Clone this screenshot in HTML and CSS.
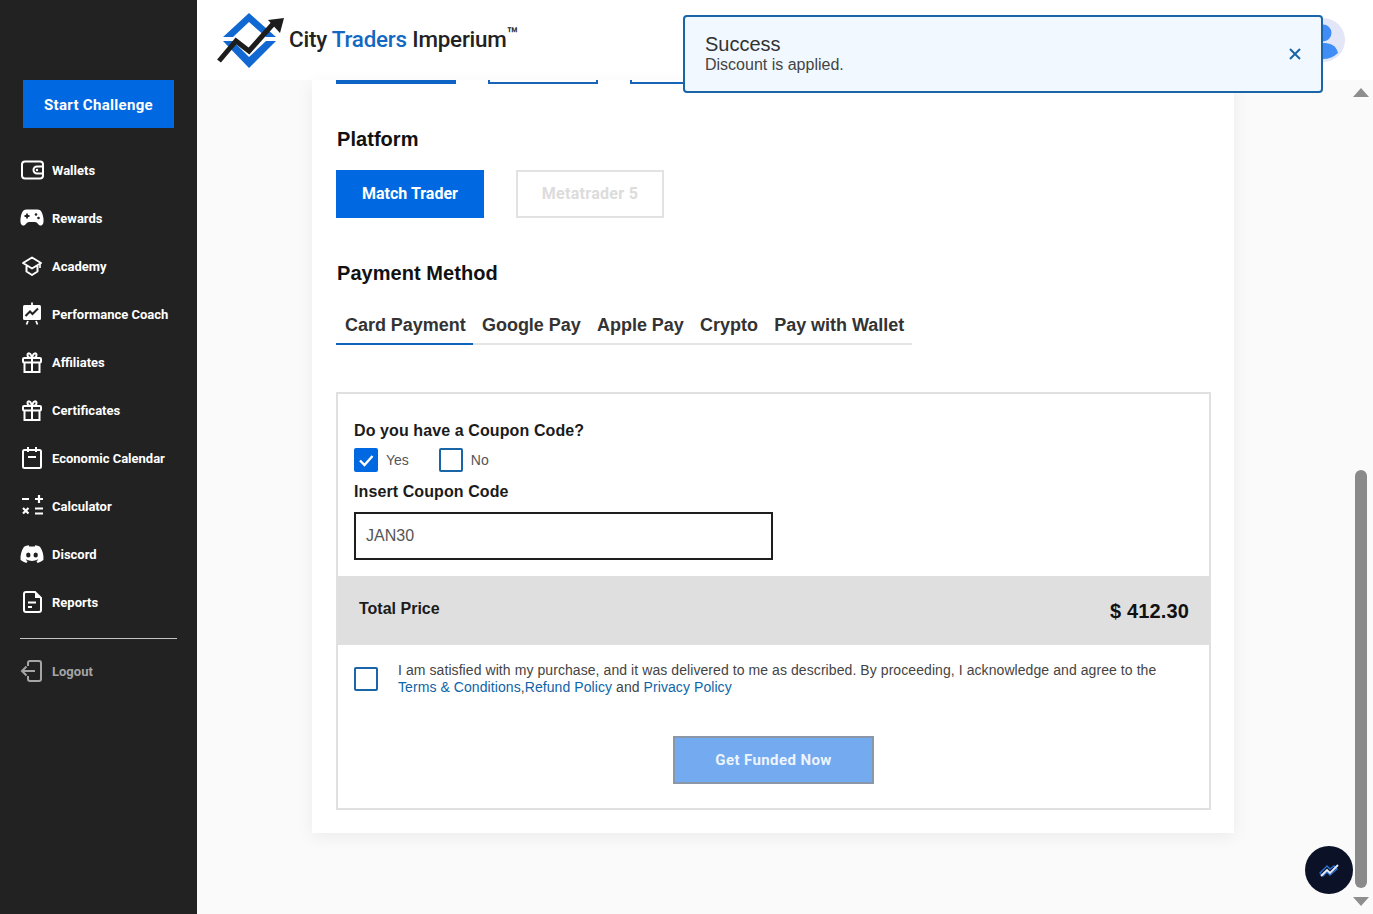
FILE: index.html
```html
<!DOCTYPE html>
<html lang="en">
<head>
<meta charset="utf-8">
<title>City Traders Imperium</title>
<link rel="stylesheet" href="styles.css">
</head>
<body>
<div class="app">
  <aside class="sidebar">
    <a class="start-btn">Start Challenge</a>
    <nav class="nav">
      <a class="nav-item"><svg class="ic" viewBox="0 0 24 24"><rect x="2" y="3.500" width="21" height="17" rx="3" fill="none" stroke="#fff" stroke-width="2"/><path d="M23 8.500h-6a3.500 3.500 0 0 0 0 7h6" fill="none" stroke="#fff" stroke-width="2"/><circle cx="17" cy="12" r="1.200" fill="#fff"/></svg><span>Wallets</span></a>
      <a class="nav-item"><svg class="ic" viewBox="0 0 24 24"><path d="M6.500 3.500h11c3.500 0 5 3.500 5.800 8 .6 3.500.4 7.500-2.300 8-2.400.4-3.600-3.500-6-3.500H9c-2.400 0-3.600 3.900-6 3.500-2.700-.5-2.900-4.500-2.300-8 .8-4.500 2.300-8 5.800-8z" fill="#fff"/><path d="M4.500 10h5M7 7.500v5" stroke="#222" stroke-width="1.800"/><circle cx="16" cy="8.500" r="1.300" fill="#222"/><circle cx="18.500" cy="12" r="1.300" fill="#222"/></svg><span>Rewards</span></a>
      <a class="nav-item"><svg class="ic" viewBox="0 0 24 24"><path d="M12 3.500l9 5.500-9 5.500-9-5.500z M6.500 12v5.500l5.500 3.500 5.500-3.500V12" fill="none" stroke="#fff" stroke-width="2" stroke-linejoin="round"/><path d="M20 9.500V14" stroke="#fff" stroke-width="1.600"/></svg><span>Academy</span></a>
      <a class="nav-item"><svg class="ic" viewBox="0 0 24 24"><path d="M12 0.500v3" stroke="#fff" stroke-width="1.800"/><rect x="3" y="3" width="18" height="15" rx="1.500" fill="#fff"/><path d="M5.500 14l4.500-4.500 2.500 2.500 5.500-5.500" fill="none" stroke="#222" stroke-width="2"/><path d="M8 19l-1.500 3.500M16 19l1.500 3.500" stroke="#fff" stroke-width="1.800"/></svg><span>Performance Coach</span></a>
      <a class="nav-item"><svg class="ic" viewBox="0 0 24 24"><g fill="none" stroke="#fff" stroke-width="2"><rect x="3" y="8" width="18" height="4.500" rx="1"/><path d="M4.500 12.500V22h15v-9.500M12 8v14"/><path d="M12 8C9 8 7.500 6.800 7.500 5S10.500 1.500 12 8c1.500-6.500 4.500-4.800 4.500-3S15 8 12 8z"/></g></svg><span>Affiliates</span></a>
      <a class="nav-item"><svg class="ic" viewBox="0 0 24 24"><g fill="none" stroke="#fff" stroke-width="2"><rect x="3" y="8" width="18" height="4.500" rx="1"/><path d="M4.500 12.500V22h15v-9.500M12 8v14"/><path d="M12 8C9 8 7.500 6.800 7.500 5S10.500 1.500 12 8c1.500-6.500 4.500-4.800 4.500-3S15 8 12 8z"/></g></svg><span>Certificates</span></a>
      <a class="nav-item"><svg class="ic" viewBox="0 0 24 24"><g fill="none" stroke="#fff" stroke-width="2"><rect x="3" y="4" width="18" height="18" rx="1.500"/><path d="M8 1v5M16 1v5M8 11h8"/></g></svg><span>Economic Calendar</span></a>
      <a class="nav-item"><svg class="ic" viewBox="0 0 24 24"><path d="M2 5h7M15 5h8M19 1v8M3 14l5.500 5.500M8.500 14L3 19.500M15 14.500h8M15 19.500h8" stroke="#fff" stroke-width="2.200" fill="none"/></svg><span>Calculator</span></a>
      <a class="nav-item"><svg class="ic" viewBox="0 0 24 24"><path d="M20 4.800A19 19 0 0 0 15.300 3.300l-.6 1.300a17 17 0 0 0-5.400 0L8.700 3.300A19 19 0 0 0 4 4.800C1 9.300.2 13.700.6 18a19 19 0 0 0 5.800 3l1.200-2-1.900-1 .5-.4a13.500 13.500 0 0 0 11.600 0l.5.400-1.900 1 1.200 2a19 19 0 0 0 5.800-3c.5-5-.8-9.400-3.400-13.200z" fill="#fff"/><ellipse cx="8.300" cy="13" rx="2.200" ry="2.500" fill="#222"/><ellipse cx="15.700" cy="13" rx="2.200" ry="2.500" fill="#222"/></svg><span>Discord</span></a>
      <a class="nav-item"><svg class="ic" viewBox="0 0 24 24"><path d="M6 2h9l6 6v12a2 2 0 0 1-2 2H6a2 2 0 0 1-2-2V4a2 2 0 0 1 2-2z" fill="none" stroke="#fff" stroke-width="2"/><path d="M8 12.500h8M8 17h4" stroke="#fff" stroke-width="2"/><path d="M15 2v6h6" fill="#fff"/></svg><span>Reports</span></a>
    </nav>
    <hr class="divider">
    <a class="nav-item logout"><svg class="ic" viewBox="0 0 24 24"><path d="M8 7V4a2 2 0 0 1 2-2h9a2 2 0 0 1 2 2v16a2 2 0 0 1-2 2h-9a2 2 0 0 1-2-2v-3" fill="none" stroke="#a5a5a5" stroke-width="2"/><path d="M15 12H2M6.500 7.500L2 12l4.500 4.500" fill="none" stroke="#a5a5a5" stroke-width="2"/></svg><span>Logout</span></a>
  </aside>

  <div class="main">
    <header class="topbar">
      <div class="brand">
        <svg class="brand-mark" viewBox="0 0 68 60">
          <path d="M6 27L32 3l27 24H49L32 12 16 27z" fill="#1268d3"/>
          <path d="M6 31h10l16 16 17-16h10L32 58z" fill="#1268d3"/>
          <path d="M2 51l17-20 13 10 24-27" fill="none" stroke="#1d1d1d" stroke-width="5"/>
          <path d="M67 8L51 10l12 13z" fill="#1d1d1d"/>
        </svg>
        <span class="brand-name">City <em>Traders</em> Imperium<sup>™</sup></span>
      </div>
      <div class="avatar"><svg viewBox="0 0 44 44"><circle cx="22" cy="15" r="8.500" fill="#3f8df5"/><path d="M7 35c2-8 8-10 15-10s13 2 15 10a22 22 0 0 1-30 0z" fill="#3f8df5"/></svg></div>
    </header>

    <div class="body">
      <section class="content">
        <div class="card">
          <div class="steps">
            <span class="step step-active"></span>
            <span class="step step-a"></span>
            <span class="step step-b"></span>
          </div>
          <h2 class="heading heading-platform">Platform</h2>
          <div class="platforms">
            <button class="plat plat-on">Match Trader</button>
            <button class="plat plat-off">Metatrader 5</button>
          </div>
          <h2 class="heading heading-pay">Payment Method</h2>
          <div class="tabs">
            <span class="tab tab-on">Card Payment</span>
            <span class="tab">Google Pay</span>
            <span class="tab">Apple Pay</span>
            <span class="tab">Crypto</span>
            <span class="tab">Pay with Wallet</span>
          </div>
          <div class="box">
            <div class="coupon">
              <h3 class="label-q">Do you have a Coupon Code?</h3>
              <div class="choices">
                <label class="choice"><span class="cb cb-on"><svg viewBox="0 0 24 24"><path d="M6 12.500l4.500 4.500L18.500 8" fill="none" stroke="#fff" stroke-width="2.400"/></svg></span>Yes</label>
                <label class="choice"><span class="cb"></span>No</label>
              </div>
              <div class="label-i">Insert Coupon Code</div>
              <div class="input">JAN30</div>
            </div>
            <div class="total">
              <span class="total-label">Total Price</span>
              <span class="total-value">$ 412.30</span>
            </div>
            <div class="terms">
              <span class="cb"></span>
              <p>I am satisfied with my purchase, and it was delivered to me as described. By proceeding, I acknowledge and agree to the<br><a>Terms &amp; Conditions</a>,<a>Refund Policy</a> and <a>Privacy Policy</a></p>
            </div>
            <div class="submit-row"><button class="submit">Get Funded Now</button></div>
          </div>
        </div>
      </section>
      <div class="scrollbar">
        <span class="arrow arrow-up"></span>
        <div class="track"><div class="thumb"></div></div>
        <span class="arrow arrow-down"></span>
      </div>
    </div>
  </div>
</div>

<div class="toast">
  <div>
    <div class="toast-title">Success</div>
    <div class="toast-msg">Discount is applied.</div>
  </div>
  <svg class="toast-x" viewBox="0 0 14 14"><path d="M2 2l10 10M12 2L2 12" stroke="#1a64a8" stroke-width="2"/></svg>
</div>

<div class="widget"><svg viewBox="0 0 24 24"><path d="M3 15l7-7 3 3 4-3 3 3-7 6-3-3-4 4z" fill="none" stroke="#2f6fd0" stroke-width="1.400"/><path d="M4 18l6-6 3 3 8-8" fill="none" stroke="#e8eefc" stroke-width="1.800"/></svg></div>
</body>
</html>
```

FILE: styles.css
```css
* { box-sizing: border-box; }
html, body { margin: 0; height: 914px; overflow: hidden; background: #fafafa; }
body { font-family: "Liberation Sans", Arial, sans-serif; color: #000; position: relative; }
.app { display: flex; height: 914px; }

.sidebar { width: 197px; flex: none; background: #222; padding-top: 80px; display: flex; flex-direction: column; }
.start-btn { display: flex; align-items: center; justify-content: center; width: 151px; height: 48px; margin: 0 23px 18px; padding-top: 1px; background: #0068e0; color: #fff; font: 700 15px Roboto, sans-serif; letter-spacing: .3px; }
.nav { display: flex; flex-direction: column; }
.nav-item { display: flex; align-items: center; gap: 8px; height: 48px; padding-left: 20px; color: #fff; font: 700 13px Roboto, sans-serif; }
.ic { width: 24px; height: 24px; flex: none; }
.divider { margin: 12px 20px 8px; width: 157px; border: 0; border-top: 1px solid #c4c4c4; }
.logout { color: #a5a5a5; }

.main { flex: 1; min-width: 0; display: flex; flex-direction: column; }
.topbar { height: 80px; flex: none; background: #fff; display: flex; align-items: flex-start; justify-content: space-between; padding: 0 28px 0 20px; }
.brand { display: flex; align-items: center; gap: 4px; height: 80px; }
.brand-mark { width: 68px; height: 60px; flex: none; }
.brand-name { font: 500 22.400px Roboto, sans-serif; color: #222; letter-spacing: -.2px; white-space: nowrap; margin-top: -2px; }
.brand-name em { font-style: normal; color: #1268c3; }
.brand-name sup { font-size: 19px; vertical-align: 6px; line-height: 0; }
.avatar { width: 44px; height: 44px; margin-top: 18px; border-radius: 50%; background: #e2e6f6; overflow: hidden; }
.avatar svg { display: block; }

.body { flex: 1; min-height: 0; display: flex; }
.content { flex: 1; min-width: 0; display: flex; justify-content: center; }
.card { width: 922px; height: 753px; background: #fff; box-shadow: 0 4px 16px rgba(0, 0, 0, .06); padding: 0 24px; }

.steps { display: flex; height: 4px; }
.step { display: block; height: 4px; }
.step-active { width: 120px; background: #0e64c4; }
.step-a { width: 110px; margin-left: 32px; border: 2px solid #1a64b8; border-width: 0 2px 2px; }
.step-b { width: 200px; margin-left: 32px; border: 2px solid #1a64b8; border-width: 0 0 2px 2px; }

.heading { margin: 0; font-size: 20px; line-height: 24px; font-weight: 700; color: #111; letter-spacing: .05px; padding-left: 1px; }
.heading-platform { margin-top: 43px; }
.heading-pay { margin-top: 43px; }
.platforms { display: flex; gap: 32px; margin-top: 19px; }
.plat { width: 148px; height: 48px; padding: 0 0 2px; font: 700 16px Roboto, sans-serif; }
.plat-on { background: #0068e0; border: 0; color: #fff; }
.plat-off { background: #fff; border: 2px solid #e2e2e2; color: #dcdcdc; letter-spacing: .3px; }

.tabs { display: flex; width: 576px; height: 40px; margin-top: 20px; border-bottom: 2px solid #e4e4e4; }
.tab { height: 40px; padding: 0 7.300px 0 9px; line-height: 40px; font-size: 18px; font-weight: 700; color: #333; letter-spacing: -.03px; white-space: nowrap; }
.tab-on { border-bottom: 2px solid #0e64b8; }

.box { width: 875px; height: 418px; margin-top: 47px; border: 2px solid #e0e0e0; display: flex; flex-direction: column; }
.coupon { padding: 27px 16px 16px; }
.label-q { margin: 0; font-size: 16px; line-height: 20px; font-weight: 700; color: #1b1b1b; letter-spacing: .1px; }
.choices { display: flex; gap: 30px; margin-top: 7px; }
.choice { display: flex; align-items: center; gap: 8px; font-size: 14px; color: #555; }
.cb { display: block; width: 24px; height: 24px; flex: none; border: 2px solid #1a64a8; border-radius: 2px; background: #fff; }
.cb svg { display: block; width: 24px; height: 24px; margin: -2px; }
.cb-on { background: #0068e0; border-color: #0068e0; }
.label-i { margin-top: 10px; font-size: 16px; line-height: 20px; font-weight: 700; color: #1b1b1b; letter-spacing: .09px; }
.input { width: 419px; height: 48px; margin-top: 10px; padding: 0 10px; border: 2px solid #1e1e1e; font-size: 16px; line-height: 44px; color: #555; }

.total { height: 69px; flex: none; background: #dfdfdf; display: flex; justify-content: space-between; padding: 0 20px 0 21px; }
.total-label { font-size: 16px; font-weight: 700; line-height: 20px; margin-top: 23px; color: #1b1b1b; }
.total-value { font-size: 20px; font-weight: 700; line-height: 24px; margin-top: 23px; color: #111; letter-spacing: .15px; }

.terms { display: flex; gap: 20px; padding: 22px 16px 0; }
.terms p { margin: -5px 0 0; font-size: 14px; line-height: 17px; color: #444; letter-spacing: .075px; }
.terms a { color: #0e64a8; }
.submit-row { display: flex; justify-content: center; margin-top: 40px; }
.submit { width: 201px; height: 48px; padding: 0; background: #73aaf0; border: 2px solid #8a97a8; color: #eef4fd; font: 700 15px Roboto, sans-serif; letter-spacing: .4px; }

.scrollbar { width: 24px; flex: none; display: flex; flex-direction: column; align-items: center; padding: 8px 0; background: #fafafa; }
.arrow { display: block; width: 0; height: 0; flex: none; border-left: 8px solid transparent; border-right: 8px solid transparent; }
.arrow-up { border-bottom: 9px solid #8e8e8e; }
.arrow-down { border-top: 9px solid #8e8e8e; }
.track { flex: 1; width: 12px; padding-top: 373px; padding-bottom: 9px; display: flex; }
.thumb { flex: 1; background: #8a8a8a; border-radius: 6px; }

.toast { position: absolute; left: 683px; top: 15px; width: 640px; height: 78px; background: #f1f8ff; border: 2px solid #1a64a8; border-radius: 4px; display: flex; align-items: center; justify-content: space-between; padding: 0 19px 2px 20px; }
.toast-title { font-size: 20px; line-height: 24px; color: #333; }
.toast-msg { font-size: 16px; line-height: 18px; color: #444; }
.toast-x { width: 14px; height: 14px; margin-top: 2px; }

.widget { position: absolute; left: 1305px; top: 846px; width: 48px; height: 48px; border-radius: 50%; background: #0b1126; display: flex; align-items: center; justify-content: center; }
.widget svg { width: 24px; height: 24px; }
```
